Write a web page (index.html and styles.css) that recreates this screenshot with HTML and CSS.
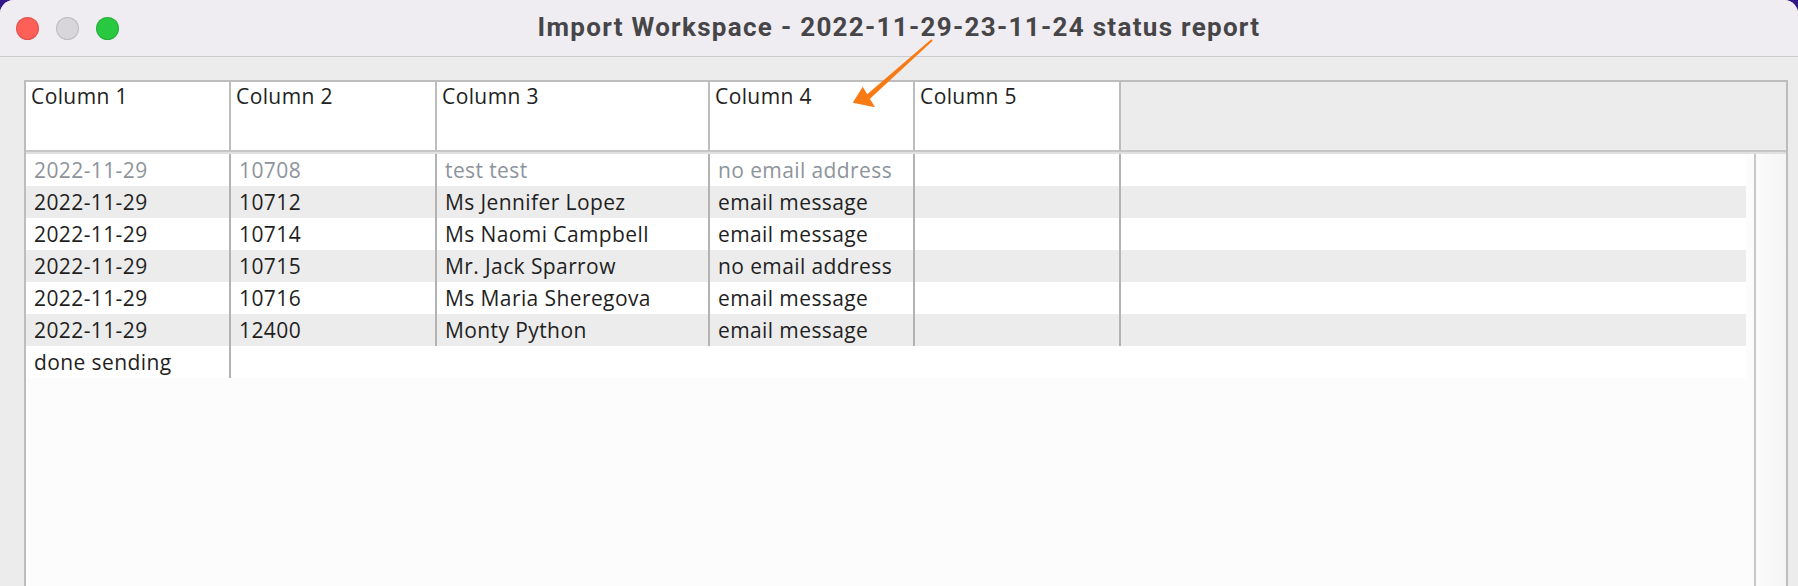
FILE: index.html
```html
<!DOCTYPE html>
<html lang="en">
<head>
    <meta charset="UTF-8">
    <title>Import Workspace - status report</title>
    <link rel="stylesheet" href="styles.css">
</head>
<body>
    <div class="ventana">
        <div class="barra">
            <div class="luces">
                <span class="luz roja"></span>
                <span class="luz gris"></span>
                <span class="luz verde"></span>
            </div>
            <div class="titulo">Import Workspace - 2022-11-29-23-11-24 status report</div>
            <div></div>
        </div>

        <div class="contenido">
            <div class="hoja">
                <div class="cabecera">
                    <div class="celda-cab">Column 1</div>
                    <div class="celda-cab">Column 2</div>
                    <div class="celda-cab">Column 3</div>
                    <div class="celda-cab">Column 4</div>
                    <div class="celda-cab">Column 5</div>
                    <div class="celda-cab vacia"></div>
                </div>
                <div class="cuerpo">
                    <div class="filas">
                        <div class="fila tenue">
                            <div class="celda">2022-11-29</div>
                            <div class="celda">10708</div>
                            <div class="celda">test test</div>
                            <div class="celda">no email address</div>
                            <div class="celda"></div>
                            <div class="celda"></div>
                        </div>
                        <div class="fila">
                            <div class="celda">2022-11-29</div>
                            <div class="celda">10712</div>
                            <div class="celda">Ms Jennifer Lopez</div>
                            <div class="celda">email message</div>
                            <div class="celda"></div>
                            <div class="celda"></div>
                        </div>
                        <div class="fila">
                            <div class="celda">2022-11-29</div>
                            <div class="celda">10714</div>
                            <div class="celda">Ms Naomi Campbell</div>
                            <div class="celda">email message</div>
                            <div class="celda"></div>
                            <div class="celda"></div>
                        </div>
                        <div class="fila">
                            <div class="celda">2022-11-29</div>
                            <div class="celda">10715</div>
                            <div class="celda">Mr. Jack Sparrow</div>
                            <div class="celda">no email address</div>
                            <div class="celda"></div>
                            <div class="celda"></div>
                        </div>
                        <div class="fila">
                            <div class="celda">2022-11-29</div>
                            <div class="celda">10716</div>
                            <div class="celda">Ms Maria Sheregova</div>
                            <div class="celda">email message</div>
                            <div class="celda"></div>
                            <div class="celda"></div>
                        </div>
                        <div class="fila">
                            <div class="celda">2022-11-29</div>
                            <div class="celda">12400</div>
                            <div class="celda">Monty Python</div>
                            <div class="celda">email message</div>
                            <div class="celda"></div>
                            <div class="celda"></div>
                        </div>
                        <div class="fila final">
                            <div class="celda">done sending</div>
                        </div>
                    </div>
                    <div class="scroll"></div>
                </div>
            </div>
        </div>

        <svg class="flecha" width="100" height="80" viewBox="0 0 100 80">
            <path d="M92.7 10.7 L91.3 9.3 L26.3 65.1 L29.7 68.9 Z" fill="#f87a14"/>
            <path d="M12.7 72.7 L22.7 56.7 L35 77.3 Z" fill="#f87a14"/>
        </svg>
    </div>
</body>
</html>
```

FILE: styles.css
```css
body {
    margin: 0;
    width: 1798px;
    height: 586px;
    overflow: hidden;
    background-color: #33168a;
    font-family: "Open Sans", sans-serif;
}
.ventana {
    position: relative;
    height: 586px;
    background: #ececec;
    border-radius: 14px 14px 0 0;
    overflow: hidden;
}
.barra {
    display: grid;
    grid-template-columns: 1fr auto 1fr;
    align-items: center;
    height: 56px;
    background: #efedf2;
    border-bottom: 1px solid #cdcbd0;
}
.luces {
    display: flex;
    gap: 17px;
    padding-left: 16px;
}
.luz {
    width: 23px;
    height: 23px;
    border-radius: 50%;
    box-sizing: border-box;
    border: 1px solid rgba(0, 0, 0, 0.12);
}
.roja {
    background: #fe5f57;
}
.gris {
    background: #d8d6db;
}
.verde {
    background: #28c840;
}
.titulo {
    font-family: Roboto, sans-serif;
    font-weight: 700;
    font-size: 26px;
    letter-spacing: 1.3px;
    color: #464548;
    padding-bottom: 2px;
}
.contenido {
    padding: 23px 10px 0 24px;
}
.hoja {
    border: 2px solid #bdbdbd;
    border-bottom: none;
    height: 520px;
    background: #fcfcfc;
}
.cabecera {
    display: grid;
    grid-template-columns: 205px 206px 273px 205px 206px 1fr;
    height: 68px;
    border-bottom: 2px solid #c6c6c6;
}
.celda-cab {
    background: #ffffff;
    border-right: 2px solid #bdbdbd;
    padding: 0 5px;
    font-size: 21px;
    letter-spacing: 0.4px;
    line-height: 28px;
    color: #222222;
    white-space: nowrap;
}
.celda-cab.vacia {
    background: #ececec;
    border-right: none;
}
.cuerpo {
    display: flex;
    height: 100%;
    border-top: 2px solid #e0e0e0;
}
.filas {
    flex: 1;
    padding-right: 8px;
    border-right: 2px solid #c8c8c8;
}
.fila {
    display: grid;
    grid-template-columns: 205px 206px 273px 205px 206px 1fr;
    height: 32px;
    background: #ffffff;
}
.fila:nth-child(even) {
    background: #ececec;
}
.celda {
    border-right: 2px solid #b3b3b3;
    padding-left: 8px;
    font-size: 21px;
    letter-spacing: 0.4px;
    line-height: 32px;
    color: #1f1f1f;
    white-space: nowrap;
}
.celda:last-child {
    border-right: none;
}
.fila.final .celda {
    border-right: 2px solid #b3b3b3;
}
.tenue .celda {
    color: #8e949b;
}
.scroll {
    width: 30px;
    background: linear-gradient(to right, #fbfbfb, #f5f5f5);
}
.flecha {
    position: absolute;
    left: 840px;
    top: 30px;
}
```
